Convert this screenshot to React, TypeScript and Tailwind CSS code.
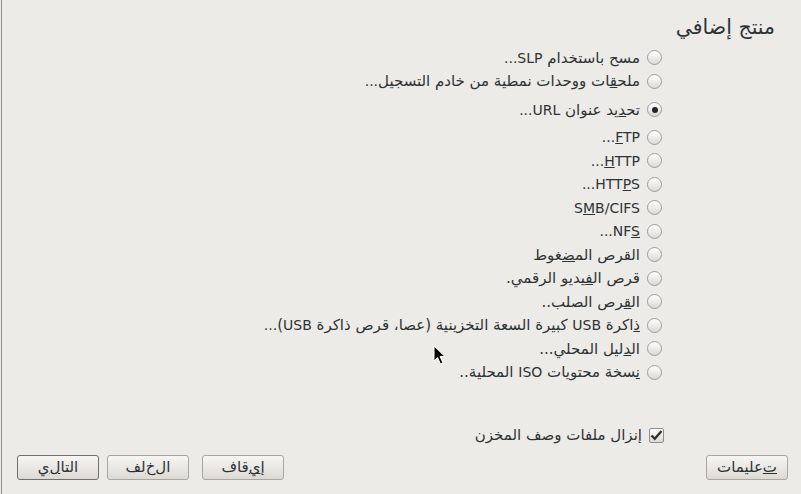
import React from "react";

const L = ({ children }: { children: React.ReactNode }) => <span className="text-[14px]">{children}</span>;

const Radio = ({ checked = false }: { checked?: boolean }) => (
  <span className="relative flex h-[15px] w-[15px] shrink-0 items-center justify-center rounded-full border border-[#9d9c98] bg-gradient-to-b from-[#ffffff] to-[#dcd9d4] shadow-[inset_0_1px_0_#ffffff]">
    {checked && <span className="h-[6px] w-[6px] rounded-full bg-[#232628]" />}
  </span>
);

const Check = () => (
  <span className="flex h-[15px] w-[15px] shrink-0 items-center justify-center rounded-[2px] border border-[#8f8e8a] bg-gradient-to-b from-[#ffffff] to-[#dcd9d4]">
    <svg width="13" height="12" viewBox="0 0 13 12">
      <path d="M1.5 6.5 L4.8 9.8 L11.5 2" fill="none" stroke="#2e3436" strokeWidth="2.4" />
    </svg>
  </span>
);

type Row = { label: React.ReactNode; checked?: boolean };

const Option = ({ label, checked }: Row) => (
  <div className="flex h-[23.5px] items-center gap-[7px]">
    <Radio checked={checked} />
    <span className="whitespace-nowrap">{label}</span>
  </div>
);

const Btn = ({ children, def = false, cls = "" }: { children: React.ReactNode; def?: boolean; cls?: string }) => (
  <div
    className={`flex h-[25px] w-[82px] items-center justify-center rounded-[3px] border bg-gradient-to-b from-[#f7f6f4] to-[#dddad5] text-[15px] ${
      def ? "border-[#6f6f6c]" : "border-[#a7a6a1]"
    } ${cls}`}
  >
    {children}
  </div>
);

export default function App() {
  const urlRows: Row[] = [
    { label: <L><u>F</u>TP...</L> },
    { label: <L><u>H</u>TTP...</L> },
    { label: <L>HTT<u>P</u>S...</L> },
    { label: <L>S<u>M</u>B/CIFS</L> },
    { label: <L>NF<u>S</u>...</L> },
    { label: <>القرص الم<u>ض</u>غوط</> },
    { label: <>قرص ال<u>ف</u>يديو الرقمي.</> },
    { label: <>ال<u>ق</u>رص الصلب..</> },
    { label: <><u>ذ</u>اكرة <L>USB</L> كبيرة السعة التخزينية (عصا، قرص ذاكرة <L>USB</L>)<L>...</L></> },
    { label: <>ال<u>د</u>ليل المحلي...</> },
    { label: <><u>ن</u>سخة محتويات <L>ISO</L> المحلية..</> },
  ];
  return (
    <div
      dir="rtl"
      className="relative flex h-[494px] w-[801px] flex-col overflow-hidden bg-[#edebe7] text-[15px] text-[#2e3436]"
      style={{ fontFamily: '"DejaVu Sans", sans-serif' }}
    >
      <div className="absolute left-[1px] top-0 h-full w-[1px] bg-[#8c8c89]" />
      <div className="pr-[26px] pt-[13px] text-[20.5px] leading-[28px]">منتج إضافي</div>
      <div className="flex flex-col pr-[139px] pt-[5px]">
        <Option label={<>مسح باستخدام <L>SLP...</L></>} />
        <Option label={<>ملح<u>ق</u>ات ووحدات نمطية من خادم التسجيل<L>...</L></>} />
        <div className="h-[5px]" />
        <Option checked label={<>تح<u>د</u>يد عنوان <L>URL...</L></>} />
        <div className="h-[4px]" />
        {urlRows.map((r, i) => (
          <Option key={i} {...r} />
        ))}
      </div>
      <div className="flex-1" />
      <div className="flex h-[24px] items-center gap-[7px] pr-[137px]">
        <Check />
        <span>
          <u>إ</u>نزال ملفات وصف المخزن
        </span>
      </div>
      <div className="flex items-center justify-between pb-[14px] pl-[17px] pr-[13px] pt-[8px]">
        <Btn>
          <u>ت</u>عليمات
        </Btn>
        <div className="flex items-center gap-[8px]">
          <Btn cls="ml-[5px]">
            إ<u>ي</u>قاف
          </Btn>
          <Btn>
            ال<u>خ</u>لف
          </Btn>
          <Btn def>
            التا<u>ل</u>ي
          </Btn>
        </div>
      </div>
      <svg className="absolute left-[433px] top-[345px]" width="14" height="21" viewBox="0 0 14 21">
        <path d="M1 1 L1 16 L4.5 12.5 L7.5 19 L10 18 L7 11.5 L12 11.5 Z" fill="#000" stroke="#fff" strokeWidth="1" />
      </svg>
    </div>
  );
}
